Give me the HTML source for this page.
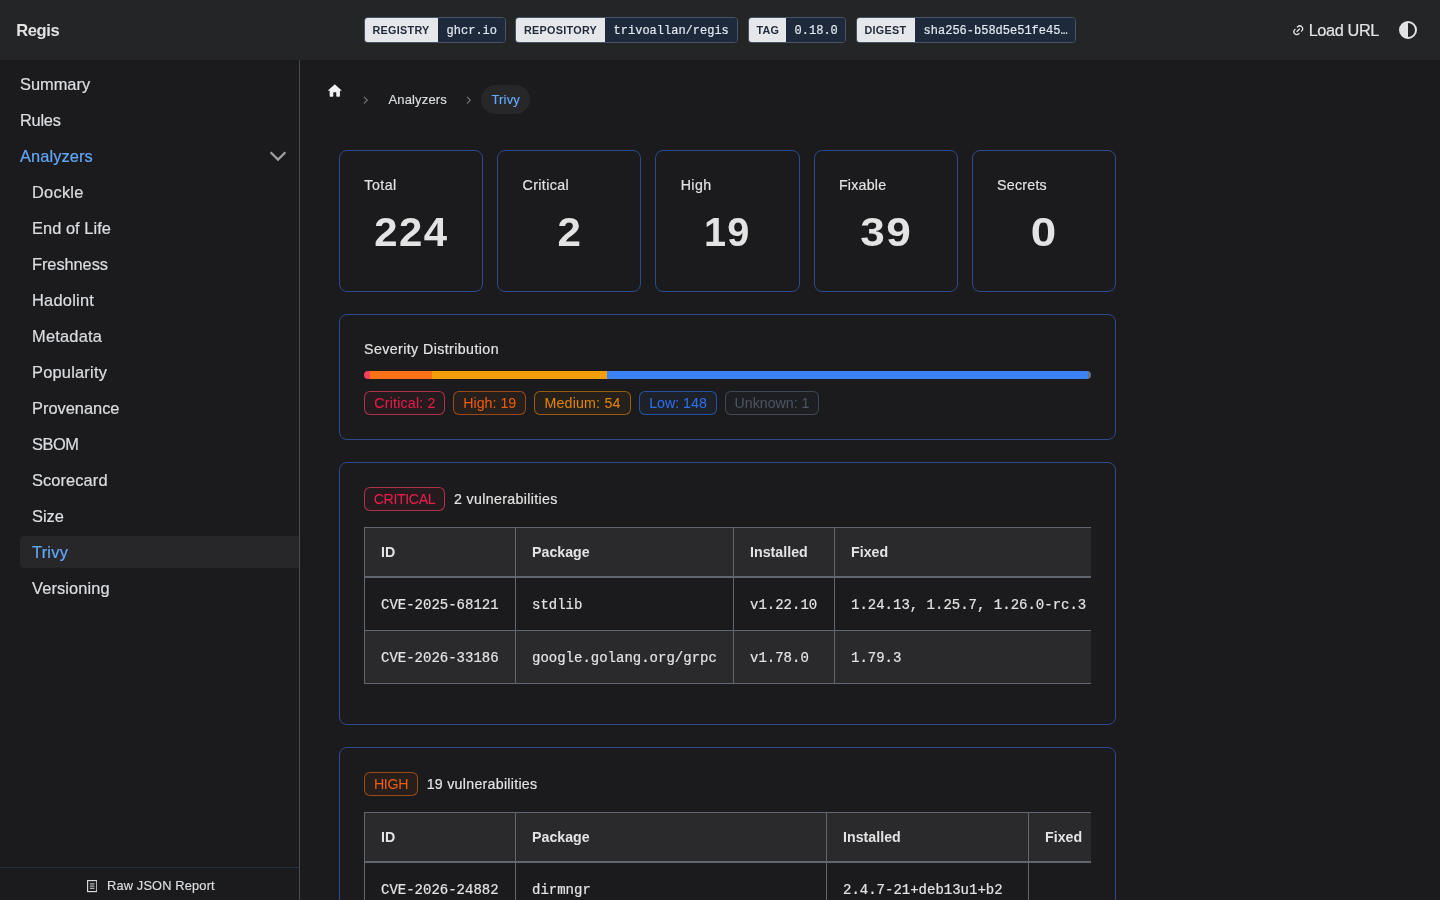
<!DOCTYPE html>
<html lang="en">
<head>
<meta charset="utf-8">
<title>Regis - Trivy</title>
<style>
*{box-sizing:border-box;margin:0;padding:0}
html{will-change:transform}
html,body{width:1440px;height:900px;overflow:hidden;background:#1b1b1d;color:#e3e3e3;font-family:"Liberation Sans",sans-serif;font-size:16px;}
.mono{font-family:"Liberation Mono",monospace}
/* ---------- navbar ---------- */
#nav{position:absolute;left:0;top:0;width:1440px;height:60px;background:#242526;box-shadow:0 1px 2px 0 rgba(0,0,0,.1)}
#brand{position:absolute;left:16.2px;top:20px;font-weight:bold;font-size:16.5px;line-height:20px;color:#e3e3e3;white-space:nowrap;letter-spacing:-.36px}
#chips{position:absolute;left:0;top:17px}
.chip{position:absolute;top:0;display:flex;height:26px;border:1px solid #475569;border-radius:3.5px;overflow:hidden;white-space:nowrap}
.chip .k{background:#e5e7eb;color:#1f2937;font-weight:bold;font-size:10.8px;letter-spacing:.3px;padding:0 0 0 7.4px;line-height:24px;text-align:left}
.chip .v{background:#1e293b;color:#e2e8f0;font-family:"Liberation Mono",monospace;font-size:12px;padding:0 0 0 8.6px;line-height:26px;flex:1}
#loadurl{position:absolute;left:1308.7px;top:19px;font-size:16.3px;line-height:22px;color:#e3e3e3;white-space:nowrap;letter-spacing:-.38px}
#linkic{position:absolute;left:1291.95px;top:24.1px;width:12.5px;height:12.5px}
#contrast{position:absolute;left:1399px;top:21px;width:18px;height:18px}
/* ---------- sidebar ---------- */
#side{position:absolute;left:0;top:60px;width:300px;height:840px;border-right:1px solid #444950}
#side ul{list-style:none}
.mi{-webkit-text-stroke:.22px currentColor;position:absolute;left:20px;height:32px;width:279px;line-height:32px;padding-left:0;font-size:16.4px;color:#dadde1;white-space:nowrap}
.mi.sub{padding-left:12px}
.mi.act{color:#62a6f7}
.mi.cur{background:#27272a;border-radius:4px 0 0 4px;color:#62a6f7}
#chev{position:absolute;left:268px;top:86px;width:20px;height:20px}
#raw{position:absolute;left:0;top:807px;width:299px;height:33px;border-top:1px solid #253044;font-size:12.8px;color:#dadde1}
#raw span{position:absolute;left:107px;top:9px;line-height:18px;white-space:nowrap;letter-spacing:.17px}
#docic{position:absolute;left:87px;top:12.4px;width:10.4px;height:12.2px}
/* ---------- main ---------- */
#main{position:absolute;left:300px;top:60px;width:1140px;height:840px;overflow:hidden}
.abs{position:absolute}
#home{position:absolute;left:26.1px;top:21.7px;width:17.6px;height:17.6px}
.bc{position:absolute;top:31px;font-size:13px;line-height:18px;color:#dadde1;white-space:nowrap;letter-spacing:.15px}
.bcsep{position:absolute;top:35.8px;width:5.2px;height:8.4px}
#bcpill{position:absolute;left:181px;top:25px;width:49px;height:28.5px;border-radius:15px;background:#27272a}
.card{position:absolute;border:1px solid #2a4b8c;border-radius:8px;background:#1b1b1d}
.stat .lbl{position:absolute;left:24.3px;top:24px;font-size:14.2px;line-height:21px;color:#e3e3e3;white-space:nowrap;letter-spacing:.25px}
.stat .num{position:absolute;left:0;width:100%;top:55.6px;text-align:center;font-weight:bold;font-size:40.5px;line-height:50px;color:#e3e3e3;letter-spacing:1.4px;padding-left:.4px}
.h4{position:absolute;left:24px;font-size:14.2px;line-height:21px;color:#e3e3e3;white-space:nowrap;letter-spacing:.42px}
#bar{position:absolute;left:24px;top:56px;width:727px;height:8px;border-radius:4px;overflow:hidden;display:flex}
#bar i{display:block;height:8px}
.bdg{position:absolute;height:24px;border:1px solid;border-radius:6px;font-size:14.2px;line-height:22px;text-align:center;white-space:nowrap;letter-spacing:.2px}
.b-c{color:#e41e4b;border-color:rgba(244,63,94,.66);background:rgba(225,29,72,.055)}
.b-h{color:#ea5d0e;border-color:rgba(240,105,20,.58);background:rgba(234,104,12,.06)}
.b-m{color:#dc8409;border-color:rgba(225,135,10,.6);background:rgba(217,119,6,.06)}
.b-l{color:#2f6fe6;border-color:rgba(47,111,230,.62);background:rgba(47,111,230,.07)}
.b-u{color:#4b5563;border-color:rgba(75,85,99,.75);background:rgba(75,85,99,.06)}
.cnt{position:absolute;font-size:14.2px;line-height:24px;color:#e3e3e3;white-space:nowrap;letter-spacing:.34px}
.tw{position:absolute;left:24px;width:727px;overflow:hidden}
table{border-collapse:collapse;border-spacing:0;table-layout:fixed}
th,td{border:1px solid #606770;padding:0 16px;text-align:left;white-space:nowrap;vertical-align:middle;overflow:hidden}
th{font-weight:bold;font-size:14.2px;color:#e3e3e3;height:50px;background:#2a2a2d;border-bottom:2px solid #606770;letter-spacing:.02px}
td{font-family:"Liberation Mono",monospace;font-size:14px;height:53px;color:#e3e3e3;padding-top:1.4px}
tr.alt td{background:#2a2a2d}
.stat .lbl,.h4,.cnt,.bc,#raw span{-webkit-text-stroke:.18px currentColor}
.bdg{-webkit-text-stroke:.07px currentColor}
#loadurl{-webkit-text-stroke:.2px currentColor}
td,.chip .v{-webkit-text-stroke:.2px currentColor}
</style>
</head>
<body>
<div id="nav">
  <div id="brand">Regis</div>
  <div id="chips">
    <div class="chip" style="left:364px;width:142px"><span class="k" style="width:73px">REGISTRY</span><span class="v">ghcr.io</span></div>
    <div class="chip" style="left:515px;width:223px"><span class="k" style="width:89px;padding-left:7.9px">REPOSITORY</span><span class="v">trivoallan/regis</span></div>
    <div class="chip" style="left:748px;width:98px"><span class="k" style="width:37px">TAG</span><span class="v">0.18.0</span></div>
    <div class="chip" style="left:856px;width:220px"><span class="k" style="width:58px">DIGEST</span><span class="v">sha256-b58d5e51fe45…</span></div>
  </div>
  <svg id="linkic" viewBox="0 0 24 24" fill="none" stroke="#e6e6e6" stroke-width="2.35" stroke-linecap="round" stroke-linejoin="round"><g transform="rotate(-45 12 12)"><path d="M8.800 17.500H8A5.500 5.500 0 0 1 8 6.500h.800"/><path d="M15.200 6.500H16a5.500 5.500 0 1 1 0 11h-.800"/><path d="M8.600 12h6.800"/></g></svg>
  <div id="loadurl">Load URL</div>
  <svg id="contrast" viewBox="0 0 18 18"><circle cx="9" cy="9" r="8" fill="none" stroke="#e3e3e3" stroke-width="2"/><path d="M9 1a8 8 0 0 0 0 16z" fill="#e3e3e3"/></svg>
</div>

<div id="side">
  <div class="mi" style="top:8px">Summary</div>
  <div class="mi" style="top:44px;letter-spacing:-0.25px">Rules</div>
  <div class="mi act" style="top:80px;letter-spacing:0.1px">Analyzers</div>
  <svg id="chev" viewBox="0 0 20 20" fill="none" stroke="#a0a0a2" stroke-width="2.2"><path d="M2.6 6.2 10 13.6l7.4-7.4"/></svg>
  <div class="mi sub" style="top:116px;letter-spacing:0.25px">Dockle</div>
  <div class="mi sub" style="top:152px;letter-spacing:0.05px">End of Life</div>
  <div class="mi sub" style="top:188px;letter-spacing:-0.07px">Freshness</div>
  <div class="mi sub" style="top:224px;letter-spacing:0.25px">Hadolint</div>
  <div class="mi sub" style="top:260px;letter-spacing:0.23px">Metadata</div>
  <div class="mi sub" style="top:296px;letter-spacing:0.22px">Popularity</div>
  <div class="mi sub" style="top:332px">Provenance</div>
  <div class="mi sub" style="top:368px;letter-spacing:-0.47px">SBOM</div>
  <div class="mi sub" style="top:404px;letter-spacing:0.1px">Scorecard</div>
  <div class="mi sub" style="top:440px">Size</div>
  <div class="mi sub cur" style="top:476px;letter-spacing:0.25px">Trivy</div>
  <div class="mi sub" style="top:512px;letter-spacing:0.12px">Versioning</div>
  <div id="raw">
    <svg id="docic" viewBox="0 0 10.4 12.2" fill="none" stroke="#dadde1"><rect x=".6" y=".6" width="9.2" height="11" stroke-width="1.15"/><path d="M2.9 3.9h4.6M2.9 6.1h4.6M2.9 8.3h4.6" stroke-width="1"/></svg>
    <span>Raw JSON Report</span>
  </div>
</div>

<div id="main">
  <svg id="home" viewBox="0 0 24 24"><path d="M10 19v-5h4v5c0 .55.45 1 1 1h3c.55 0 1-.45 1-1v-7h1.7c.46 0 .68-.57.33-.87L12.67 3.600c-.38-.34-.96-.34-1.340 0l-8.36 7.530c-.34.300-.13.870.33.870H5v7c0 .55.45 1 1 1h3c.55 0 1-.45 1-1z" fill="#f0f0f0"/></svg>
  <svg class="bcsep" style="left:63.3px" viewBox="0 0 6 10" fill="none" stroke="#76787d" stroke-width="1.35"><path d="M1 1l4 4-4 4"/></svg>
  <div class="bc" style="left:88.5px">Analyzers</div>
  <svg class="bcsep" style="left:166.3px" viewBox="0 0 6 10" fill="none" stroke="#76787d" stroke-width="1.35"><path d="M1 1l4 4-4 4"/></svg>
  <div id="bcpill"></div>
  <div class="bc" style="left:191.5px;color:#62a6f7">Trivy</div>

  <!-- stat cards -->
  <div class="card stat" style="left:39px;top:90px;width:144.3px;height:142px"><div class="lbl" style="letter-spacing:.5px">Total</div><div class="num" style="transform:scaleX(1.035)">224</div></div>
  <div class="card stat" style="left:197.2px;top:90px;width:144.3px;height:142px"><div class="lbl" style="letter-spacing:.42px">Critical</div><div class="num" style="transform:scaleX(1.04);padding-left:1.6px">2</div></div>
  <div class="card stat" style="left:355.4px;top:90px;width:144.3px;height:142px"><div class="lbl" style="letter-spacing:.42px">High</div><div class="num" style="transform:scaleX(.98)">19</div></div>
  <div class="card stat" style="left:513.6px;top:90px;width:144.3px;height:142px"><div class="lbl">Fixable</div><div class="num" style="transform:scaleX(1.09)">39</div></div>
  <div class="card stat" style="left:671.8px;top:90px;width:144.3px;height:142px"><div class="lbl">Secrets</div><div class="num" style="transform:scaleX(1.13)">0</div></div>

  <!-- severity -->
  <div class="card" style="left:39px;top:254.4px;width:777px;height:125.6px">
    <div class="h4" style="top:23.5px">Severity Distribution</div>
    <div id="bar"><i style="width:6px;background:#f43f5e"></i><i style="width:62.2px;background:#f97316"></i><i style="width:175.3px;background:#f59e0b"></i><i style="width:480.3px;background:#3b82f6"></i><i style="width:3.2px;background:#6b7280"></i></div>
    <div class="bdg b-c" style="left:24px;top:76px;width:81px;padding-left:1px">Critical: 2</div>
    <div class="bdg b-h" style="left:113px;top:76px;width:73px;letter-spacing:0;padding-left:.5px">High: 19</div>
    <div class="bdg b-m" style="left:194px;top:76px;width:97px">Medium: 54</div>
    <div class="bdg b-l" style="left:299px;top:76px;width:78px;letter-spacing:0">Low: 148</div>
    <div class="bdg b-u" style="left:385px;top:76px;width:94px;letter-spacing:0">Unknown: 1</div>
  </div>

  <!-- critical -->
  <div class="card" style="left:39px;top:402.3px;width:777px;height:262.4px">
    <div class="bdg b-c" style="left:24px;top:24px;width:81px;letter-spacing:-.38px">CRITICAL</div>
    <div class="cnt" style="left:114px;top:24px">2 vulnerabilities</div>
    <div class="tw" style="top:63.7px;height:160px">
      <table style="width:1000px">
        <colgroup><col style="width:151px"><col style="width:218px"><col style="width:101px"><col></colgroup>
        <tr><th>ID</th><th>Package</th><th>Installed</th><th>Fixed</th></tr>
        <tr><td>CVE-2025-68121</td><td>stdlib</td><td>v1.22.10</td><td>1.24.13, 1.25.7, 1.26.0-rc.3</td></tr>
        <tr class="alt"><td>CVE-2026-33186</td><td>google.golang.org/grpc</td><td>v1.78.0</td><td>1.79.3</td></tr>
      </table>
    </div>
  </div>

  <!-- high -->
  <div class="card" style="left:39px;top:687.1px;width:777px;height:400px">
    <div class="bdg b-h" style="left:24px;top:24px;width:54px;letter-spacing:-.32px">HIGH</div>
    <div class="cnt" style="left:86.7px;top:24px;letter-spacing:.28px">19 vulnerabilities</div>
    <div class="tw" style="top:63.7px;height:200px">
      <table style="width:1000px">
        <colgroup><col style="width:151px"><col style="width:311px"><col style="width:202px"><col></colgroup>
        <tr><th>ID</th><th>Package</th><th>Installed</th><th>Fixed</th></tr>
        <tr><td>CVE-2026-24882</td><td>dirmngr</td><td>2.4.7-21+deb13u1+b2</td><td></td></tr>
      </table>
    </div>
  </div>
</div>
</body>
</html>
